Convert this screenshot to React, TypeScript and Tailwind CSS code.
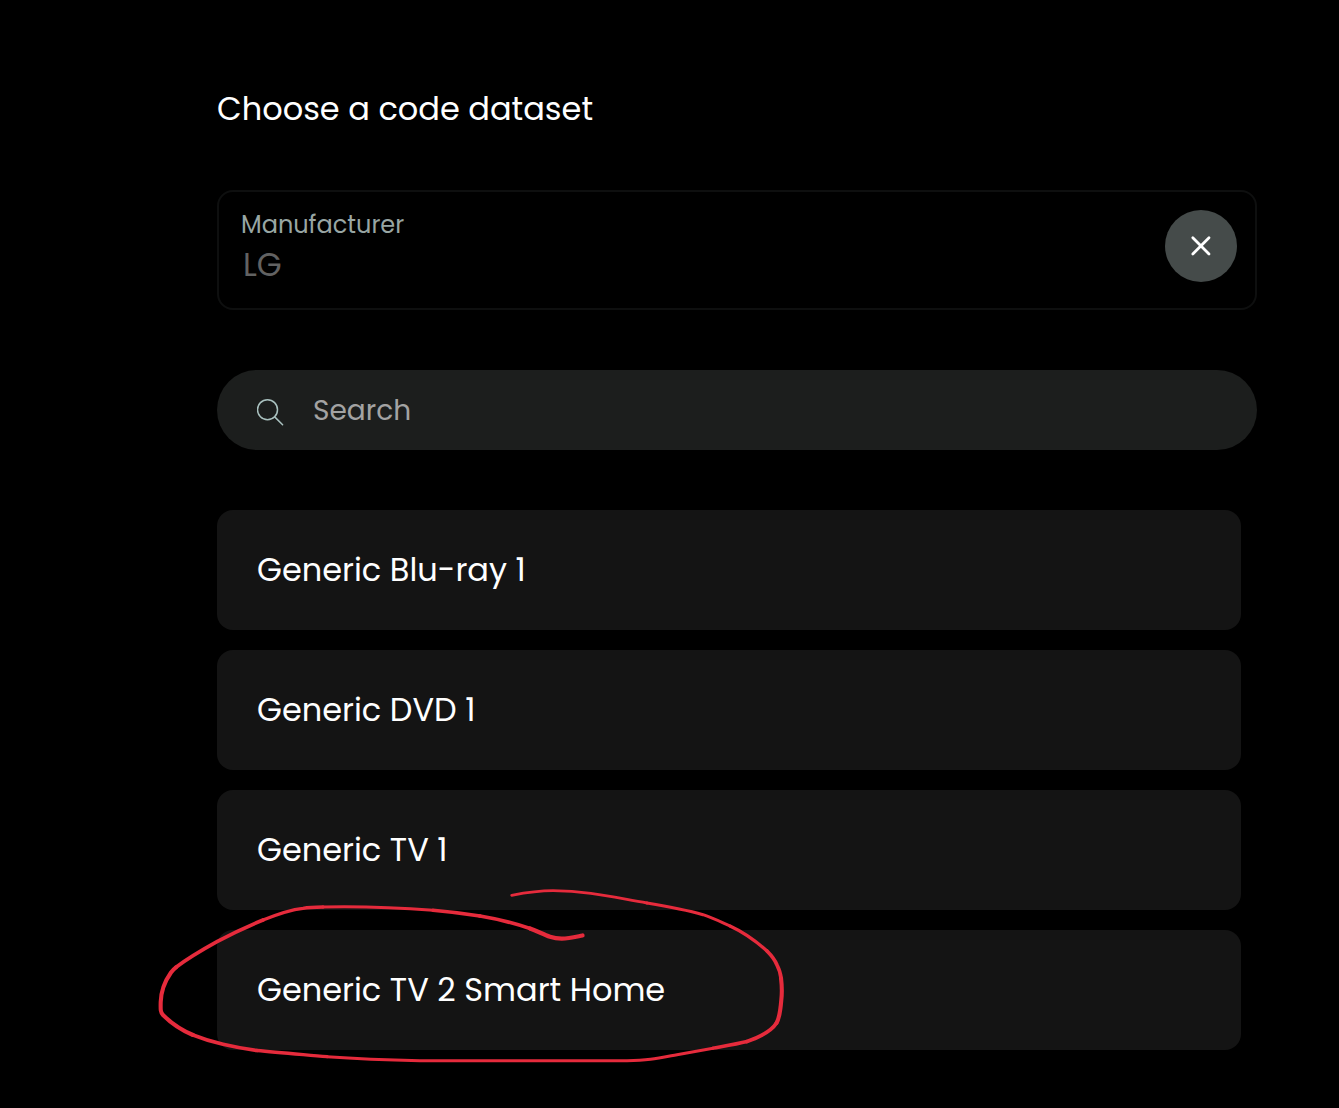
import React, { useState } from 'react';

const DATASETS = [
  { name: 'Generic Blu-ray 1' },
  { name: 'Generic DVD 1' },
  { name: 'Generic TV 1' },
  { name: 'Generic TV 2 Smart Home', marked: true },
];

const SearchIcon: React.FC = () => (
  <svg
    className="h-8 w-7 shrink-0 text-[#a9c1bf]"
    viewBox="0 0 28 32"
    fill="none"
    stroke="currentColor"
    strokeWidth="1.5"
    strokeLinecap="round"
    aria-hidden="true"
  >
    <circle cx="10.5" cy="15.7" r="10" />
    <path d="M17.7 22.9 25.6 30.8" />
  </svg>
);

const CloseIcon: React.FC = () => (
  <svg
    className="h-6 w-6"
    viewBox="0 0 24 24"
    fill="none"
    stroke="currentColor"
    strokeWidth="2.8"
    strokeLinecap="round"
    aria-hidden="true"
  >
    <path d="M3.8 3.8 20 20M20 3.8 3.8 20" />
  </svg>
);

// Hand drawn marker loop, the stroke gets heavier on the turns
const MarkerLoop: React.FC = () => (
  <svg
    className="pointer-events-none absolute -left-[60px] -top-[42px] h-[176px] w-[628px] max-w-none"
    viewBox="0 0 628 176"
    fill="none"
    stroke="#e62b3c"
    strokeLinecap="round"
    strokeLinejoin="round"
    aria-hidden="true"
  >
    <path strokeWidth="2.8" d="M354.7 7.3C372 4 382 2.7 396 2.7C432 3.2 456 9.3 490 15" />
    <path strokeWidth="3" d="M490 15C510 18.3 528 21.500 546 26.700C556 30 564 34 573 38" />
    <path strokeWidth="3.3" d="M573 38C586 44 600 54 610 63" />
    <path strokeWidth="3.7" d="M610 63C615 68 618 72 620 77C623 83 623.700 86 624 90" />
    <path strokeWidth="4.1" d="M624 90C625 98 625 106 624.300 112C623.500 122 622.500 130 619.500 135" />
    <path strokeWidth="3.9" d="M619.500 135C615 142 603 149 590 153.500" />
    <path strokeWidth="3.4" d="M590 153.500C580 156 568 158 556 160.200" />
    <path strokeWidth="3" d="M556 160.200L520 166.700C500 170.500 492 172.500 470 172.700L263 172.700C228 172 195 170.500 170 168.700" />
    <path strokeWidth="3.3" d="M170 168.700C145 166.500 120 164.500 100 162.500" />
    <path strokeWidth="3.7" d="M100 162.500C85 160.500 76 158.700 66 156.300C55 153.800 46 151 36 147" />
    <path strokeWidth="4.1" d="M36 147C24 142 14 135 6 127C3.500 124.500 3.500 122 3.700 114C4 104 8 93 14 84.500C15.500 82.500 17 80.800 19 79.300" />
    <path strokeWidth="3.7" d="M19 79.300C30 71 45 62 60 53.700C75 45.500 90 38.500 106 32" />
    <path strokeWidth="3.3" d="M106 32C122 25.500 135 21.500 146 20.300C152 19.300 158 19.100 166 19" />
    <path strokeWidth="3" d="M166 19C205 18.200 240 19.500 276 22.300" />
    <path strokeWidth="3.4" d="M276 22.300C292 23.700 308 25.700 323 28" />
    <path strokeWidth="3.8" d="M323 28C341 31 357 35 373 40.500" />
    <path strokeWidth="4.3" d="M373 40.500C381 43.500 387 46.800 393 48.800C397 50.200 400 50.700 404.700 50.700C412 50.500 418 49 425.500 47.500" />
  </svg>
);

const ManufacturerField: React.FC = () => {
  const [value, setValue] = useState('LG');

  return (
    <div className="mt-[57px] flex items-start justify-between rounded-2xl border-2 border-[#0e0f0f] p-[18px]">
      <div className="flex grow flex-col pl-1">
        <label htmlFor="manufacturer" className="text-2xl leading-[30px] text-[#98a6a4]">
          Manufacturer
        </label>
        <input
          id="manufacturer"
          type="text"
          value={value}
          onChange={(e) => setValue(e.target.value)}
          className="h-[50px] w-full bg-transparent pl-0.5 text-[32px] text-[#626262] outline-none"
        />
      </div>
      <button
        type="button"
        aria-label="Clear manufacturer"
        onClick={() => setValue('')}
        className="flex h-[72px] w-[72px] shrink-0 items-center justify-center rounded-full bg-[#454b4a] text-white"
      >
        <CloseIcon />
      </button>
    </div>
  );
};

export default function App() {
  return (
    <div className="min-h-screen overflow-x-hidden bg-black font-['Poppins',sans-serif] text-white">
      <main className="pb-[58px] pl-[217px] pr-[82px] pt-[85px]">
        <h1 className="text-[32px] leading-[48px]">Choose a code dataset</h1>

        <ManufacturerField />

        <div className="mt-[60px] flex h-20 items-center gap-7 rounded-full bg-[#1c1e1d] px-10">
          <SearchIcon />
          <input
            type="search"
            aria-label="Search"
            placeholder="Search"
            className="h-full grow bg-transparent pt-0.5 text-[28px] outline-none placeholder:text-[#a3a3a3]"
          />
        </div>

        <ul className="mt-[60px] flex flex-col gap-5 pr-4">
          {DATASETS.map((item) => (
            <li key={item.name} className="relative">
              <button
                type="button"
                className="flex h-[120px] w-full items-center rounded-2xl bg-[#141414] px-10 text-left text-[32px] leading-[48px]"
              >
                {item.name}
              </button>
              {item.marked && <MarkerLoop />}
            </li>
          ))}
        </ul>
      </main>
    </div>
  );
}
